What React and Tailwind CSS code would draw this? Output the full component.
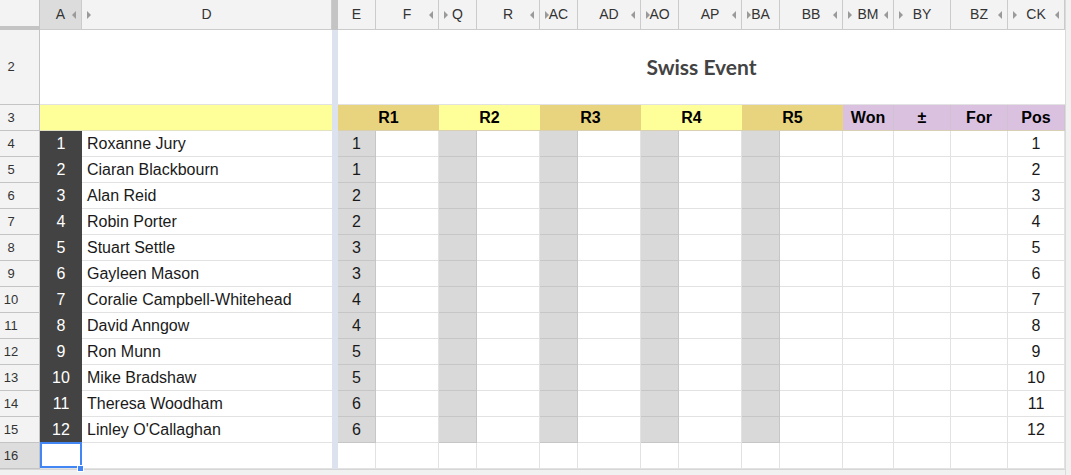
import React from "react";

const players = [
    ["Roxanne Jury", 1],
    ["Ciaran Blackbourn", 1],
    ["Alan Reid", 2],
    ["Robin Porter", 2],
    ["Stuart Settle", 3],
    ["Gayleen Mason", 3],
    ["Coralie Campbell-Whitehead", 4],
    ["David Anngow", 4],
    ["Ron Munn", 5],
    ["Mike Bradshaw", 5],
    ["Theresa Woodham", 6],
    ["Linley O'Callaghan", 6],
];

// columns right of the frozen divider (after E)
const rightCols = [
    { w: "w-[63px]", grey: false },
    { w: "w-[38px]", grey: true },
    { w: "w-[63px]", grey: false },
    { w: "w-[38px]", grey: true },
    { w: "w-[63px]", grey: false },
    { w: "w-[38px]", grey: true },
    { w: "w-[63px]", grey: false },
    { w: "w-[38px]", grey: true },
    { w: "w-[63px]", grey: false },
    { w: "w-[51px]", grey: false },
    { w: "w-[57px]", grey: false },
    { w: "w-[57px]", grey: false },
];

const headers = [
    { label: "A", w: "w-[42px]", l: false, r: true, sel: true },
    { label: "D", w: "w-[250px]", l: true, r: false },
    { divider: true },
    { label: "E", w: "w-[38px]", l: false, r: false },
    { label: "F", w: "w-[63px]", l: false, r: true },
    { label: "Q", w: "w-[38px]", l: true, r: false },
    { label: "R", w: "w-[63px]", l: false, r: true },
    { label: "AC", w: "w-[38px]", l: true, r: false },
    { label: "AD", w: "w-[63px]", l: false, r: true },
    { label: "AO", w: "w-[38px]", l: true, r: false },
    { label: "AP", w: "w-[63px]", l: false, r: true },
    { label: "BA", w: "w-[38px]", l: true, r: false },
    { label: "BB", w: "w-[63px]", l: false, r: true },
    { label: "BM", w: "w-[51px]", l: true, r: true },
    { label: "BY", w: "w-[57px]", l: true, r: false },
    { label: "BZ", w: "w-[57px]", l: false, r: true },
    { label: "CK", w: "w-[57px]", l: true, r: true },
];

const roundCells = [
    { label: "R1", cls: "w-[101px] bg-[#e8d47f]" },
    { label: "R2", cls: "w-[101px] bg-[#ffff99]" },
    { label: "R3", cls: "w-[101px] bg-[#e8d47f]" },
    { label: "R4", cls: "w-[101px] bg-[#ffff99]" },
    { label: "R5", cls: "w-[101px] bg-[#e8d47f]" },
    { label: "Won", cls: "w-[51px] bg-[#dbc1e0] border-r border-[#cfc3d2]" },
    { label: "±", cls: "w-[57px] bg-[#dbc1e0] border-r border-[#cfc3d2]" },
    { label: "For", cls: "w-[57px] bg-[#dbc1e0] border-r border-[#cfc3d2]" },
    { label: "Pos", cls: "w-[57px] bg-[#dbc1e0] border-r border-[#cfc3d2]" },
];

const RowHead = ({ n, selected, h = "h-full" }) => (
    <div className={`w-[40px] ${h} shrink-0 flex items-center border-r border-b border-[#c4c4c4] text-[13px] text-[#333] ${selected ? "bg-[#dddddd]" : "bg-[#f3f3f3]"}`}>
        <span className="w-[22px] text-center">{n}</span>
    </div>
);

const Divider = ({ header }) => (
    <div className={`w-[6px] h-full shrink-0 ${header ? "bg-[#c4c4c4]" : "bg-[#dde3ee]"}`} />
);

export default function App() {
    return (
        <div className="w-[1071px] h-[475px] overflow-hidden bg-[#f1f1f1] flex font-['Liberation_Sans',Arial,sans-serif] text-[#1a1a1a]">
            <div className="w-[1065px] flex flex-col shrink-0">
                {/* column letters */}
                <div className="flex h-[30px]">
                    <div className="w-[40px] h-full shrink-0 bg-[#f3f3f3] border-r border-b-[4px] border-[#c4c4c4]" />
                    {headers.map((c, i) =>
                        c.divider ? (
                            <Divider key={i} header />
                        ) : (
                            <div key={i} className={`${c.w} h-full shrink-0 relative flex items-center justify-center border-r border-b border-[#cbcbcb] text-[14px] text-[#333] ${c.sel ? "bg-[#dcdcdc]" : "bg-[#f3f3f3]"}`}>
                                {c.label}
                                {c.l && <span className="absolute left-[5px] top-[11px] w-0 h-0 border-y-[4px] border-y-transparent border-l-[4px] border-l-[#9a9a9a]" />}
                                {c.r && <span className="absolute right-[5px] top-[11px] w-0 h-0 border-y-[4px] border-y-transparent border-r-[4px] border-r-[#9a9a9a]" />}
                            </div>
                        )
                    )}
                </div>

                {/* row 2: title */}
                <div className="flex h-[75px]">
                    <RowHead n={2} />
                    <div className="w-[292px] h-full shrink-0 bg-white border-b border-[#e2e2e2]" />
                    <Divider />
                    <div className="w-[727px] h-full shrink-0 bg-white border-b border-[#e2e2e2] flex items-center justify-center">
                        <span className="font-['Lato',sans-serif] font-bold text-[21px] text-[#434343] pb-[1px]">Swiss Event</span>
                    </div>
                </div>

                {/* row 3: round headers */}
                <div className="flex h-[26px]">
                    <RowHead n={3} />
                    <div className="w-[292px] h-full shrink-0 bg-[#ffff99] border-b border-[#e2e2c0]" />
                    <Divider />
                    <div className="w-[38px] hidden" />
                    {roundCells.map((c, i) => (
                        <div key={i} className={`${c.cls} h-full shrink-0 flex items-center justify-center font-bold text-[16px] text-black border-b border-b-[#d8d0b0]`}>
                            {c.label}
                        </div>
                    ))}
                </div>

                {/* player rows */}
                {players.map(([name, grp], i) => (
                    <div key={i} className="flex h-[26px]">
                        <RowHead n={i + 4} />
                        <div className="w-[42px] h-full shrink-0 bg-[#434343] flex items-center justify-center text-white text-[16px]">{i + 1}</div>
                        <div className="w-[250px] h-full shrink-0 bg-white border-b border-[#e2e2e2] flex items-center pl-[5px] text-[16px] whitespace-nowrap">{name}</div>
                        <Divider />
                        <div className="w-[38px] h-full shrink-0 bg-[#d9d9d9] border-r border-b border-[#c6c6c6] flex items-center justify-center text-[16px]">{grp}</div>
                        {rightCols.map((c, j) => (
                            <div key={j} className={`${c.w} h-full shrink-0 border-r border-b ${c.grey ? "bg-[#d9d9d9] border-[#c6c6c6]" : "bg-white border-[#e2e2e2]"}`} />
                        ))}
                        <div className="w-[57px] h-full shrink-0 bg-white border-r border-b border-[#e2e2e2] flex items-center justify-center text-[16px]">{i + 1}</div>
                    </div>
                ))}

                {/* row 16: empty, A16 selected */}
                <div className="flex h-[26px]">
                    <RowHead n={16} selected />
                    <div className="w-[42px] h-full shrink-0 bg-white border-r border-b border-[#e2e2e2] relative">
                        <div className="absolute left-0 top-[-1px] w-[42px] h-[26px] border-2 border-[#4285f4]" />
                        <div className="absolute right-[-3px] bottom-[-4px] w-[7px] h-[7px] bg-[#4285f4] border border-white" />
                    </div>
                    <div className="w-[250px] h-full shrink-0 bg-white border-b border-[#e2e2e2]" />
                    <Divider />
                    <div className="w-[38px] h-full shrink-0 bg-white border-r border-b border-[#e2e2e2]" />
                    {rightCols.map((c, j) => (
                        <div key={j} className={`${c.w} h-full shrink-0 bg-white border-r border-b border-[#e2e2e2]`} />
                    ))}
                    <div className="w-[57px] h-full shrink-0 bg-white border-r border-b border-[#e2e2e2]" />
                </div>
                <div className="flex-1 border-t border-[#d6d6d6]" />
            </div>
            <div className="flex-1 border-l border-[#dadada]" />
        </div>
    );
}
